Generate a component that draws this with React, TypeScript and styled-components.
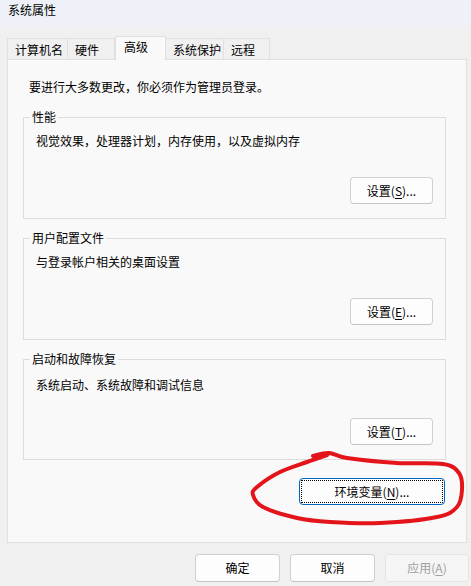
import styled, { createGlobalStyle } from 'styled-components'

const GlobalStyle = createGlobalStyle`
  html, body {
    margin: 0;
    padding: 0;
    background: #f0f0f0;
  }
  body {
    font-family: "Noto Sans CJK SC", "Noto Sans", sans-serif;
    font-size: 12px;
    color: #000;
  }
`

const Window = styled.div`
  position: relative;
  width: 471px;
  height: 586px;
  display: flex;
  flex-direction: column;
  background: #f0f0f0;
  overflow: hidden;
`

const TitleBar = styled.div`
  height: 26px;
  box-sizing: border-box;
  padding: 2px 0 0 8px;
  line-height: 16px;
  background: #eef2f8;
`

const TabStrip = styled.div`
  display: flex;
  align-items: flex-end;
  height: 24px;
  margin: 10px 0 0 7px;
`

const Tab = styled.div<{ $w: number; $active?: boolean }>`
  position: relative;
  box-sizing: border-box;
  width: ${p => p.$w}px;
  height: ${p => (p.$active ? 24 : 22)}px;
  padding: ${p => (p.$active ? '2px 0 0 8px' : '3px 0 0 7px')};
  line-height: 16px;
  white-space: nowrap;
  border: 1px solid #e0e0e0;
  border-bottom: none;
  border-left-width: ${p => (p.$active ? 1 : 0)}px;
  background: ${p => (p.$active ? '#f9f9f9' : '#f0f0f0')};
  z-index: ${p => (p.$active ? 2 : 0)};
  &:first-child {
    border-left-width: 1px;
  }
`

const Panel = styled.div`
  position: relative;
  z-index: 1;
  height: 484px;
  box-sizing: border-box;
  margin: -1px 4px 0 7px;
  padding: 19px 20px 0 15px;
  border: 1px solid #e0e0e0;
  background: #f9f9f9;
  display: flex;
  flex-direction: column;
`

const Intro = styled.div`
  margin-left: 6px;
  line-height: 16px;
`

const Group = styled.fieldset<{ $top: number; $pad: number }>`
  margin: ${p => p.$top}px 0 0 0;
  padding: ${p => p.$pad}px 12px 14px 12px;
  min-width: 0;
  border: 1px solid #dcdcdc;
  display: flex;
  flex-direction: column;
`

const Legend = styled.legend`
  margin-left: -6px;
  padding: 0 2px;
  line-height: 16px;
`

const Desc = styled.div`
  line-height: 16px;
`

const ButtonRow = styled.div<{ $top: number; $right?: number }>`
  display: flex;
  justify-content: flex-end;
  gap: 10px;
  margin-top: ${p => p.$top}px;
  padding-right: ${p => p.$right ?? 0}px;
`

const Button = styled.button<{ $w: number; $h?: number; $focused?: boolean }>`
  position: relative;
  box-sizing: border-box;
  width: ${p => p.$w}px;
  height: ${p => p.$h ?? 27}px;
  padding: 0;
  font: inherit;
  font-size: 12px;
  line-height: 16px;
  color: #000;
  background: #fdfdfd;
  border: 1px solid ${p => (p.$focused ? '#0067c0' : '#d0d0d0')};
  border-bottom-color: ${p => (p.$focused ? '#0067c0' : '#c4c4c4')};
  border-radius: 4px;
  &:disabled {
    color: #a0a0a0;
    background: #f5f5f5;
    border-color: #e5e5e5;
  }
  ${p =>
    p.$focused &&
    `
    &::after {
      content: '';
      position: absolute;
      inset: 1px;
      border: 1px dotted #000;
      border-radius: 1px;
    }
  `}
`

const Key = styled.u`
  text-underline-offset: 2px;
`

const Footer = styled.div`
  display: flex;
  justify-content: flex-end;
  gap: 10px;
  padding: 11px 2px 4px 0;
`

const Scribble = styled.svg`
  position: absolute;
  left: 0;
  top: 0;
  pointer-events: none;
  z-index: 5;
`

// hand-drawn ring around the environment-variables button
const ring: [number, number][] = [
  [313, 456], [329, 453], [347, 458], [397, 463], [443, 464], [459, 473],
  [462, 490], [457, 507], [437, 517], [380, 523], [330, 522], [297, 518],
  [263, 507], [253, 495], [257, 487], [280, 472], [307, 462], [327, 455],
]

const smoothPath = (pts: [number, number][]) => {
  let d = `M ${pts[0][0]} ${pts[0][1]}`
  for (let i = 0; i < pts.length - 1; i++) {
    const p0 = pts[i - 1] || pts[i]
    const p1 = pts[i]
    const p2 = pts[i + 1]
    const p3 = pts[i + 2] || p2
    const c1x = p1[0] + (p2[0] - p0[0]) / 6
    const c1y = p1[1] + (p2[1] - p0[1]) / 6
    const c2x = p2[0] - (p3[0] - p1[0]) / 6
    const c2y = p2[1] - (p3[1] - p1[1]) / 6
    d += ` C ${c1x} ${c1y}, ${c2x} ${c2y}, ${p2[0]} ${p2[1]}`
  }
  return d
}

const tabs = [
  { label: '计算机名', w: 61 },
  { label: '硬件', w: 47 },
  { label: '高级', w: 51, active: true },
  { label: '系统保护', w: 58 },
  { label: '远程', w: 46 },
]

const groups = [
  { title: '性能', desc: '视觉效果，处理器计划，内存使用，以及虚拟内存', key: 'S', top: 14, pad: 8, gap: 28 },
  { title: '用户配置文件', desc: '与登录帐户相关的桌面设置', key: 'E', top: 11, pad: 8, gap: 28 },
  { title: '启动和故障恢复', desc: '系统启动、系统故障和调试信息', key: 'T', top: 11, pad: 10, gap: 25 },
]

export default function App() {
  return (
    <>
      <GlobalStyle />
      <Window>
        <TitleBar>系统属性</TitleBar>

        <TabStrip>
          {tabs.map(t => (
            <Tab key={t.label} $w={t.w} $active={t.active}>
              {t.label}
            </Tab>
          ))}
        </TabStrip>

        <Panel>
          <Intro>要进行大多数更改，你必须作为管理员登录。</Intro>

          {groups.map(g => (
            <Group key={g.title} $top={g.top} $pad={g.pad}>
              <Legend>{g.title}</Legend>
              <Desc>{g.desc}</Desc>
              <ButtonRow $top={g.gap}>
                <Button $w={83}>
                  设置(<Key>{g.key}</Key>)...
                </Button>
              </ButtonRow>
            </Group>
          ))}

          <ButtonRow $top={18} $right={1}>
            <Button $w={146} $focused>
              环境变量(<Key>N</Key>)...
            </Button>
          </ButtonRow>
        </Panel>

        <Footer>
          <Button $w={85} $h={28}>确定</Button>
          <Button $w={85} $h={28}>取消</Button>
          <Button $w={84} $h={28} disabled>
            应用(<Key>A</Key>)
          </Button>
        </Footer>

        <Scribble width="471" height="586" viewBox="0 0 471 586">
          <path
            d={smoothPath(ring)}
            fill="none"
            stroke="#e3151b"
            strokeWidth="4"
            strokeLinecap="round"
            strokeLinejoin="round"
          />
        </Scribble>
      </Window>
    </>
  )
}
